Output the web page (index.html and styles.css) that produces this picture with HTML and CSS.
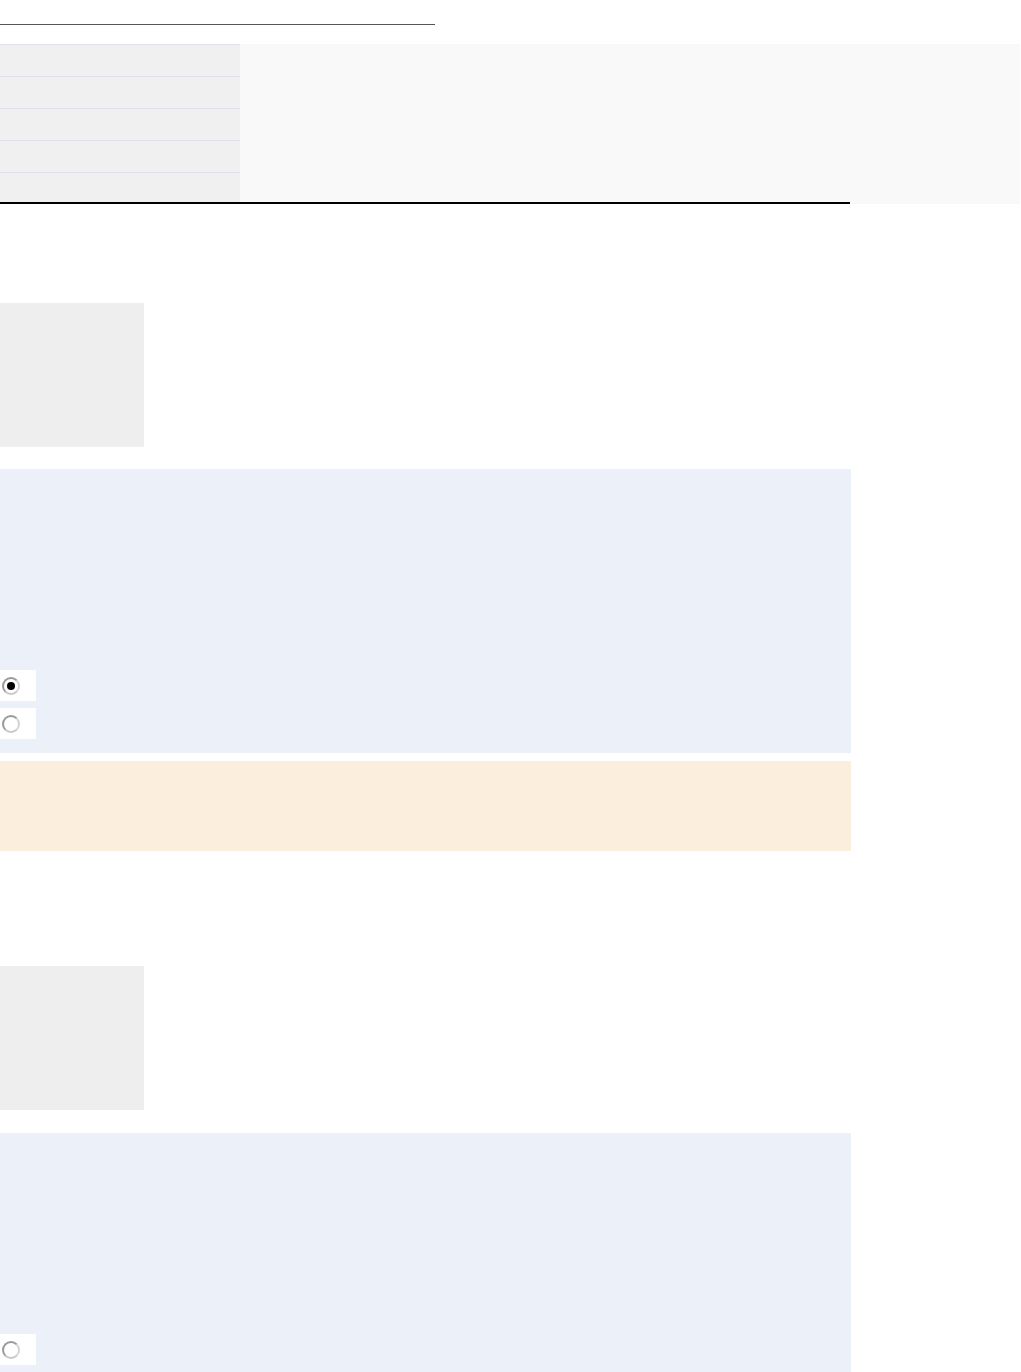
FILE: index.html
```html
<!DOCTYPE html>
<html lang="en">
<head>
<meta charset="utf-8">
<title>Page</title>
<link rel="stylesheet" href="styles.css">
</head>
<body>
<div class="top-rule"></div>

<section class="summary">
  <div class="summary-list">
    <div class="summary-cell"></div>
    <div class="summary-cell"></div>
    <div class="summary-cell"></div>
    <div class="summary-cell"></div>
    <div class="summary-cell summary-cell-last"></div>
  </div>
  <div class="summary-panel"></div>
</section>
<div class="summary-line"></div>

<div class="thumb thumb-first"></div>

<section class="question">
  <label class="choice"><input class="radio" type="radio" name="q1" checked></label>
  <label class="choice"><input class="radio" type="radio" name="q1"></label>
</section>

<div class="notice"></div>

<div class="thumb thumb-second"></div>

<section class="question question-second">
  <label class="choice"><input class="radio" type="radio" name="q2"></label>
</section>
</body>
</html>
```

FILE: styles.css
```css
html, body {
  margin: 0;
  padding: 0;
  background: #ffffff;
  font-family: "Liberation Sans", Arial, sans-serif;
}

.top-rule {
  width: 435px;
  height: 1px;
  margin-top: 24px;
  background: #555555;
}

.summary {
  display: flex;
  margin-top: 19px;
  width: 1020px;
}

.summary-list {
  width: 240px;
  display: flex;
  flex-direction: column;
}

.summary-cell {
  height: 31px;
  border-top: 1px solid #dde0e6;
  background: #f0f0f0;
}

.summary-cell-last {
  height: 29px;
}

.summary-panel {
  flex: 1;
  height: 160px;
  background: #f9f9f9;
  margin-bottom: -2px;
}

.summary-line {
  position: relative;
  width: 850px;
  height: 2px;
  background: #000000;
}

.thumb {
  width: 144px;
  height: 144px;
  background: #eeeeee;
}

.thumb-first {
  margin-top: 99px;
}

.thumb-second {
  margin-top: 115px;
}

.question {
  width: 851px;
  box-sizing: border-box;
  margin-top: 22px;
  padding: 201px 0 14px 0;
  background: #ecf0f8;
  display: flex;
  flex-direction: column;
  gap: 7px;
}

.question-second {
  margin-top: 23px;
  padding-bottom: 7px;
}

.notice {
  width: 851px;
  height: 90px;
  margin-top: 8px;
  background: #fbeedc;
}

.choice {
  display: flex;
  align-items: center;
  width: 36px;
  height: 31px;
  background: #ffffff;
}

.radio {
  -webkit-appearance: none;
  appearance: none;
  box-sizing: border-box;
  width: 18px;
  height: 18px;
  margin: 0 0 0 2px;
  border-radius: 50%;
  border: 2px solid #9a9a9a;
  border-right-color: #d4d4d4;
  border-bottom-color: #c8c8c8;
  background: #ffffff;
  display: flex;
  align-items: center;
  justify-content: center;
}

.radio:checked::after {
  content: "";
  width: 8px;
  height: 8px;
  border-radius: 50%;
  background: #000000;
}
```
